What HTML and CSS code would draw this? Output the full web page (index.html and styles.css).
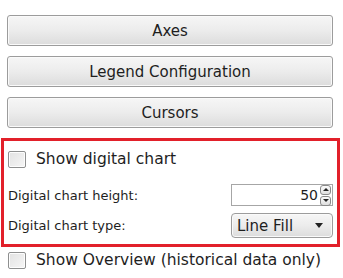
FILE: index.html
```html
<!DOCTYPE html>
<html lang="en">
<head>
    <meta charset="UTF-8">
    <meta name="viewport" content="width=device-width, initial-scale=1.0">
    <title>Chart Settings</title>
    <link rel="stylesheet" href="styles.css">
</head>
<body>
    <div class="panel">
        <div class="btn-list">
            <button class="btn">Axes</button>
            <button class="btn">Legend Configuration</button>
            <button class="btn">Cursors</button>
        </div>

        <div class="digital">
            <label class="check-row first">
                <span class="check"></span>
                <span>Show digital chart</span>
            </label>
            <div class="field-row height-row">
                <span>Digital chart height:</span>
                <div class="spinner">
                    <span class="spin-value">50</span>
                    <div class="spin-btns">
                        <span class="spin-btn"><span class="tri up"></span></span>
                        <span class="spin-btn"><span class="tri down"></span></span>
                    </div>
                </div>
            </div>
            <div class="field-row type-row">
                <span>Digital chart type:</span>
                <div class="dropdown">
                    <span>Line Fill</span>
                    <span class="tri down big"></span>
                </div>
            </div>
        </div>

        <label class="check-row overview">
            <span class="check"></span>
            <span>Show Overview (historical data only)</span>
        </label>
    </div>
</body>
</html>
```

FILE: styles.css
```css
body {
    margin: 0;
    background: #fff;
    font-family: "DejaVu Sans", Verdana, sans-serif;
    font-size: 13px;
    color: #1e1e1e;
}
.panel {
    padding-top: 15px;
}
.btn-list {
    display: flex;
    flex-direction: column;
    gap: 10px;
    padding: 0 10px 0 7px;
}
.btn {
    height: 31px;
    border: 1px solid #9c9c9c;
    border-radius: 3px;
    box-shadow: inset 0 0 0 1px #fafafa;
    background: linear-gradient(#f6f6f6, #ececec 50%, #dcdcdc);
    font-family: inherit;
    font-size: 15px;
    color: #1e1e1e;
}
.digital {
    margin: 10px 3px 0 1px;
    border: 3px solid #e2202a;
    padding: 7px 4px 6px 4px;
}
.check-row {
    display: flex;
    align-items: center;
    gap: 10px;
    font-size: 15.5px;
}
.check-row.first {
    height: 22px;
}
.check {
    width: 18px;
    height: 17px;
    box-sizing: border-box;
    border: 1px solid #8e8f8f;
    border-radius: 2px;
    box-shadow: inset 0 0 0 1px #fdfdfd;
    background: linear-gradient(135deg, #e2e2e2, #f6f6f6);
}
.field-row {
    display: flex;
    align-items: center;
    justify-content: space-between;
}
.height-row {
    margin-top: 14px;
    height: 22px;
}
.type-row {
    margin-top: 7px;
    height: 25px;
}
.spinner {
    width: 102px;
    height: 22px;
    box-sizing: border-box;
    border: 1px solid #a6a6a6;
    background: #fff;
    display: flex;
    align-items: center;
    justify-content: flex-end;
    font-size: 14px;
}
.spin-value {
    padding-right: 1px;
}
.spin-btns {
    display: flex;
    flex-direction: column;
    gap: 1px;
    padding: 0 1px;
}
.spin-btn {
    width: 9px;
    height: 8px;
    border: 1px solid #8a8a8a;
    border-radius: 3px;
    background: linear-gradient(#fbfbfb, #dedede);
    display: flex;
    align-items: center;
    justify-content: center;
}
.tri {
    width: 0;
    height: 0;
    border-left: 3px solid transparent;
    border-right: 3px solid transparent;
}
.tri.up {
    border-bottom: 3px solid #222;
}
.tri.down {
    border-top: 3px solid #222;
}
.tri.big {
    border-left-width: 4px;
    border-right-width: 4px;
    border-top-width: 5px;
}
.dropdown {
    width: 102px;
    height: 25px;
    box-sizing: border-box;
    border: 1px solid #9c9c9c;
    border-radius: 4px;
    box-shadow: inset 0 0 0 1px #fafafa;
    background: linear-gradient(#f6f6f6, #ececec 50%, #dcdcdc);
    display: flex;
    align-items: center;
    justify-content: space-between;
    padding: 0 9px 0 5px;
    font-size: 15px;
}
.overview {
    margin-top: 4px;
    height: 18px;
    padding-left: 8px;
}
```
